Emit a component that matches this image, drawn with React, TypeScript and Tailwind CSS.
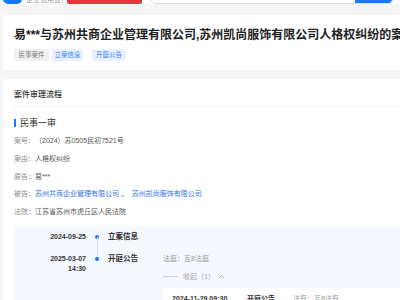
const FONT = { fontFamily: '"Liberation Sans", "Noto Sans CJK SC", sans-serif' };

const details = [
    { label: "案号：", value: "（2024）苏0505民初7521号" },
    { label: "案由：", value: "人格权纠纷" },
    { label: "原告：", value: "易***" },
];

function TimelineDot({ line }: { line?: boolean }) {
    return (
        <div className="relative w-[22px] h-[10px] shrink-0 flex items-center justify-center">
            <span className="size-[4px] rounded-full bg-[#1677ff]" />
            {line && <span className="absolute left-[10.5px] top-[5px] h-[22px] w-px bg-[#d3dcea]" />}
        </div>
    );
}

export default function App() {
    return (
        <div className="w-[400px] h-[300px] overflow-hidden bg-[#f5f5f5] text-[#333]" style={FONT}>
            {/* header, only its lower edge is on screen */}
            <header className="h-[4px] overflow-hidden bg-white flex items-end pl-[3px]">
                <div className="w-[19px] h-[20px] rounded-[5px] bg-[#1677ff] shrink-0" />
                <div className="ml-[4px] w-[37px] text-[7px] leading-[9px] text-[#999] whitespace-nowrap overflow-hidden">企业信用查询平台</div>
                <div className="ml-[4px] w-[75px] h-[16px] bg-[#e8393d] rounded-[2px] shrink-0" />
                <div className="ml-[9px] w-[242px] h-[20px] border border-[#dcdcdc] rounded-[4px] flex justify-end shrink-0">
                    <div className="w-[37px] h-full bg-[#1677ff] rounded-r-[4px]" />
                </div>
            </header>

            {/* case title card */}
            <section className="mt-[11px] ml-[3px] bg-white rounded-l-[3px] pt-[12px] pb-[9px] pl-[11px]">
                <h1 className="text-[12px] leading-[16px] font-bold text-[#222] whitespace-nowrap overflow-hidden">
                    易***与苏州共商企业管理有限公司,苏州凯尚服饰有限公司人格权纠纷的案件
                </h1>
                <div className="mt-[6px] flex items-center text-[6.5px] leading-[12px]">
                    <span className="w-[35px] h-[12px] flex items-center justify-center bg-[#f0f0f0] text-[#777] rounded-[1px]">民事案件</span>
                    <span className="ml-[3px] w-[31px] h-[12px] flex items-center justify-center bg-[#e8f1ff] text-[#3b7ff0] rounded-[1px]">立案信息</span>
                    <span className="ml-[9px] w-[34px] h-[12px] flex items-center justify-center bg-[#e8f1ff] text-[#3b7ff0] rounded-[1px]">开庭公告</span>
                </div>
            </section>

            {/* trial process card */}
            <section className="mt-[9px] ml-[3px] bg-white rounded-l-[3px] pl-[11px] h-[240px]">
                <div className="pt-[11px] h-[28px] text-[8px] leading-[10px] font-medium text-[#333] border-b border-[#eeeeee]">
                    案件审理流程
                </div>
                <div className="mt-[11px] flex items-center h-[10px]">
                    <span className="w-[2px] h-[8px] bg-[#1677ff]" />
                    <span className="ml-[4px] text-[9px] leading-[10px] text-[#333]">民事一审</span>
                </div>
                <div className="mt-[4px] text-[7px] leading-[17.75px]">
                    {details.map((d) => (
                        <div key={d.label} className="flex whitespace-nowrap">
                            <span className="text-[#8c8c8c]">{d.label}</span>
                            <span className="text-[#555]">{d.value}</span>
                        </div>
                    ))}
                    <div className="flex whitespace-nowrap">
                        <span className="text-[#8c8c8c]">被告：</span>
                        <span className="text-[#2f74e8]">苏州共商企业管理有限公司</span>
                        <span className="text-[#555]">&nbsp;，&nbsp;&nbsp;</span>
                        <span className="text-[#2f74e8]">苏州凯尚服饰有限公司</span>
                    </div>
                    <div className="flex whitespace-nowrap">
                        <span className="text-[#8c8c8c]">法院：</span>
                        <span className="text-[#555]">江苏省苏州市虎丘区人民法院</span>
                    </div>
                </div>

                {/* timeline */}
                <div className="mt-[5px] bg-[#f5f8fe] pt-[6px] pb-[10px] text-[7px] leading-[10px]">
                    <div className="flex items-start">
                        <div className="w-[72px] shrink-0 text-right font-bold text-[#333]">2024-09-25</div>
                        <TimelineDot line />
                        <div className="w-[54px] shrink-0 font-bold text-[#333] text-[7.5px]">立案信息</div>
                    </div>
                    <div className="mt-[12px] flex items-start">
                        <div className="w-[72px] shrink-0 text-right font-bold text-[#333]">
                            2025-03-07
                            <br />
                            14:30
                        </div>
                        <TimelineDot />
                        <div className="w-[54px] shrink-0 font-bold text-[#333] text-[7.5px]">开庭公告</div>
                        <div className="flex-1 pl-px">
                            <div className="text-[#999] whitespace-nowrap">法庭：互8法庭</div>
                            <div className="mt-[8px] flex items-center text-[#a6a6a6] whitespace-nowrap">
                                <span className="w-[15px] h-px bg-[#d0d0d0]" />
                                <span className="ml-[5px]">收起（1）</span>
                                <svg className="ml-[3px]" width="7" height="5" viewBox="0 0 7 5" fill="none">
                                    <path d="M1 4L3.5 1.5L6 4" stroke="#a6a6a6" strokeWidth="0.9" />
                                </svg>
                            </div>
                            <div className="mt-[6px] bg-white pt-[6px] pl-[9px] h-[20px] flex whitespace-nowrap">
                                <span className="w-[75px] font-bold text-[#333]">2024-11-29 09:30</span>
                                <span className="w-[46px] font-bold text-[#333]">开庭公告</span>
                                <span className="text-[#999]">法庭：互8法庭</span>
                            </div>
                        </div>
                    </div>
                </div>
            </section>
        </div>
    );
}
